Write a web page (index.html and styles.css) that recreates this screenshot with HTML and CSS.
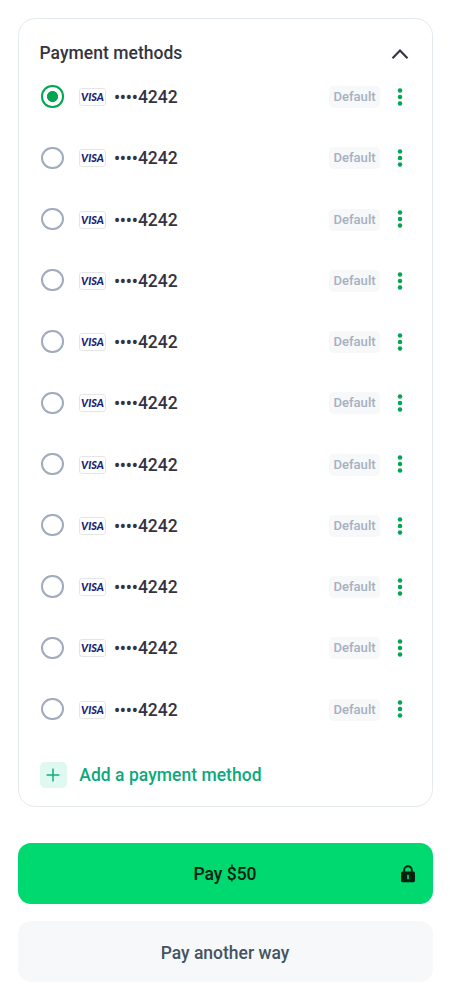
FILE: index.html
```
<!DOCTYPE html>
<html lang="en">
<head>
<meta charset="utf-8">
<title>Payment methods</title>
<link rel="stylesheet" href="styles.css">
</head>
<body>
<main class="page">
  <section class="card">
    <header class="card-header">
      <h1 class="title">Payment methods</h1>
      <svg class="chevron" viewBox="0 0 18 12"><path d="M1.5 10.2 9 2.4l7.5 7.8"/></svg>
    </header>
    <ul class="methods" id="methods"></ul>
    <div class="add">
      <span class="add-icon"><svg viewBox="0 0 26 26"><path d="M13 6.6v12.8M6.6 13h12.8"/></svg></span>
      <span class="add-label">Add a payment method</span>
    </div>
  </section>
  <button class="button primary">
    Pay $50
    <svg class="lock" viewBox="0 0 14 18"><path class="shackle" d="M3.2 8V5a3.8 3.8 0 0 1 7.6 0v3"/><rect y="6.6" width="14" height="10.6" rx="1.6"/><rect class="keyhole" x="6" y="9.8" width="2" height="4.4"/></svg>
  </button>
  <button class="button secondary">Pay another way</button>
</main>
<template id="method">
  <li class="method">
    <span class="radio"></span>
    <svg class="visa" viewBox="0 0 27 18"><rect x=".5" y=".5" width="26" height="17" rx="2.4"/><text x="2.1" y="12.9" textLength="22.8" lengthAdjust="spacingAndGlyphs">VISA</text></svg>
    <span class="number"><span class="mask">••••</span>4242</span>
    <span class="badge">Default</span>
    <svg class="more" viewBox="0 0 6 18"><circle cx="3" cy="2.5" r="2.25"/><circle cx="3" cy="9" r="2.25"/><circle cx="3" cy="15.5" r="2.25"/></svg>
  </li>
</template>
<script src="app.js"></script>
</body>
</html>
```
FILE: styles.css
```
* { box-sizing: border-box; }
body {
  margin: 0;
  background: #fff;
  font-family: Roboto, sans-serif;
  font-size: 17.5px;
  font-weight: 500;
  color: #353341;
}
.page {
  padding: 17.5px;
  display: flex;
  flex-direction: column;
}
.card {
  height: 789.5px;
  border: 1.5px solid #e4e9ee;
  border-radius: 17.5px;
  padding: 21px 21px 0;
}
.card-header {
  height: 27px;
  display: flex;
  align-items: center;
  justify-content: space-between;
}
.title { margin: 0; padding-top: 1px; font-size: 17.5px; font-weight: 500; line-height: 27px; letter-spacing: 0.03px; }
.chevron { width: 18px; height: 12px; margin: 1px 1.5px 0 0; }
.chevron path { fill: none; stroke: #353341; stroke-width: 2.1; }
.methods { list-style: none; margin: 0; padding: 0; }
.method {
  height: 61.25px;
  padding-top: 17.5px;
  display: flex;
  align-items: flex-start;
}
.method > * { flex: none; }
.radio {
  width: 22.4px;
  height: 22.4px;
  margin: 1.3px 0 0 1.8px;
  border: 2px solid #a0abbd;
  border-radius: 50%;
}
.selected .radio {
  border-color: #00a651;
  background: radial-gradient(circle, #00a651 5.2px, transparent 5.9px);
}
.visa { width: 27px; height: 18px; margin: 4.2px 0 0 15.4px; }
.visa rect { fill: #fff; stroke: #e3e5e9; }
.visa text {
  font: italic 900 11px Lato, sans-serif;
  fill: #171e75;
}
.number { margin-left: 7.8px; line-height: 26px; }
.mask { position: relative; top: 1.2px; letter-spacing: -0.12px; }
.badge {
  margin: 2px 0 0 auto;
  width: 51px;
  height: 22px;
  border-radius: 4.4px;
  background: #f7f8fa;
  color: #a6b0c0;
  font-size: 13.1px;
  line-height: 22.6px;
  text-align: center;
}
.more { width: 6px; height: 18px; margin: 3.9px 7.5px 0 17px; fill: #00a651; }
.add { display: flex; align-items: center; height: 26px; margin-top: 22px; }
.add-icon { width: 27px; height: 26px; border-radius: 5px; background: #dff9f0; }
.add-icon svg { display: block; width: 26px; height: 26px; }
.add-icon path { stroke: #0ead7e; stroke-width: 1.5; }
.add-label { margin-left: 12.8px; color: #0da97d; letter-spacing: 0.03px; }
.button {
  position: relative;
  border: 0;
  border-radius: 13px;
  height: 61.25px;
  padding: 1px 0 0;
  font: inherit;
}
.primary { margin-top: 35.6px; background: #00d870; color: #06210f; }
.secondary { margin-top: 17.3px; padding-top: 2px; background: #f7f8fa; color: #44545f; }
.lock {
  position: absolute;
  right: 17.5px;
  top: 22px;
  width: 14px;
  height: 18px;
  fill: #06210f;
}
.shackle { fill: none; stroke: #06210f; stroke-width: 1.9; }
.keyhole { fill: #00b75f; }
```
FILE: app.js
```
const list = document.getElementById("methods");
const template = document.getElementById("method");
for (let i = 0; i < 11; i++) {
  const row = template.content.firstElementChild.cloneNode(true);
  if (i === 0) row.classList.add("selected");
  list.append(row);
}
```
